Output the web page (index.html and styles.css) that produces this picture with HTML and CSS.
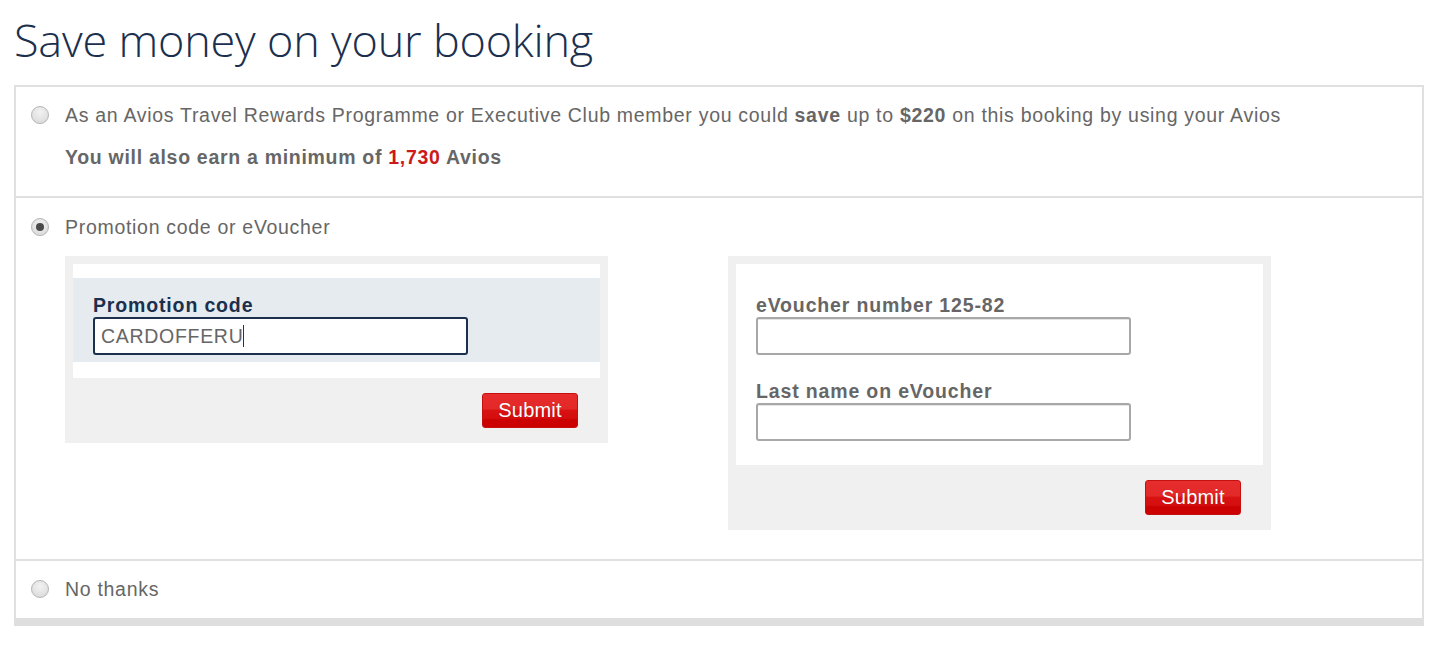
FILE: index.html
```html
<!DOCTYPE html>
<html lang="en">
<head>
<meta charset="utf-8">
<title>Save money on your booking</title>
<link rel="stylesheet" href="styles.css">
</head>
<body>
<div class="page">
  <h1 class="title">Save money on your booking</h1>
  <div class="options">
    <div class="option option-avios">
      <div class="option-head">
        <span class="radio"></span>
        <span class="option-text">As an Avios Travel Rewards Programme or Executive Club member you could <b>save</b> up to <b>$220</b> on this booking by using your Avios</span>
      </div>
      <p class="earn">You will also earn a minimum of <span class="red">1,730</span> Avios</p>
    </div>
    <div class="option option-promo">
      <div class="option-head">
        <span class="radio checked"></span>
        <span class="option-text">Promotion code or eVoucher</span>
      </div>
      <div class="panels">
        <div class="panel">
          <div class="panel-body">
            <div class="band">
              <label class="label label-navy">Promotion code</label>
              <div class="field field-focus"><span class="field-value">CARDOFFERU</span><span class="caret"></span></div>
            </div>
          </div>
          <div class="panel-foot"><button class="btn">Submit</button></div>
        </div>
        <div class="panel">
          <div class="panel-body panel-body-voucher">
            <div class="group">
              <label class="label">eVoucher number 125-82</label>
              <div class="field"></div>
            </div>
            <div class="group group-second">
              <label class="label">Last name on eVoucher</label>
              <div class="field"></div>
            </div>
          </div>
          <div class="panel-foot"><button class="btn">Submit</button></div>
        </div>
      </div>
    </div>
    <div class="option option-no">
      <div class="option-head">
        <span class="radio"></span>
        <span class="option-text">No thanks</span>
      </div>
    </div>
  </div>
</div>
</body>
</html>
```
FILE: styles.css
```css
* { box-sizing: border-box; }
html, body { margin: 0; padding: 0; background: #fff; }
body { font-family: "Liberation Sans", Arial, sans-serif; color: #666; }

.page { padding: 0 12px 0 14px; }

.title {
  margin: 0;
  padding-top: 10px;
  height: 85px;
  font-family: "Open Sans", "Noto Sans", sans-serif;
  font-weight: 300;
  font-size: 45px;
  line-height: 60px;
  color: #1b2f4e;
  letter-spacing: -0.2px;
}

.options {
  border: 2px solid #e0e0e0;
  border-bottom: 8px solid #dedede;
}

.option { padding: 15px 15px 0; }
.option + .option { border-top: 2px solid #e0e0e0; }
.option-avios { padding-bottom: 26px; }
.option-promo { padding-top: 16px; padding-bottom: 29px; }
.option-no { padding-top: 15px; padding-bottom: 16px; }

.option-head { display: flex; align-items: center; gap: 16px; height: 26px; }
.option-text { font-size: 19.5px; line-height: 26px; letter-spacing: 0.7px; white-space: nowrap; }
.option-text b { font-weight: bold; }

.radio {
  flex: none;
  width: 18px; height: 18px;
  border-radius: 50%;
  border: 1px solid #b5b5b5;
  background: radial-gradient(circle at 50% 35%, #f2f2f2 0%, #e2e2e2 60%, #d6d6d6 100%);
  position: relative;
}
.radio.checked::after {
  content: "";
  position: absolute;
  left: 4px; top: 4px;
  width: 8px; height: 8px;
  border-radius: 50%;
  background: #4a4a4a;
}

.earn {
  margin: 16px 0 0 34px;
  font-size: 19.5px;
  line-height: 26px;
  letter-spacing: 0.7px;
  font-weight: bold;
}
.red { color: #cc1a1a; }

.panels { display: flex; align-items: flex-start; gap: 120px; margin: 16px 0 0 34px; }
.panel { width: 543px; background: #f0f0f0; padding: 8px; }
.panel-body { background: #fff; padding: 14px 0 16px; }
.band { background: #e6ebef; padding: 16px 20px 7px; }
.panel-body-voucher { padding: 30px 20px 24px; }
.group-second { margin-top: 25px; }

.label {
  display: block;
  font-size: 19.5px;
  line-height: 23px;
  letter-spacing: 0.85px;
  font-weight: bold;
  color: #666;
}
.label-navy { color: #1b2f4e; }

.field {
  width: 375px;
  height: 38px;
  border: 2px solid #a8a8a8;
  border-radius: 3px;
  background: #fff;
  display: flex;
  align-items: center;
  padding-left: 6px;
  box-shadow: inset 0 1px 0 #e4e4e4;
}
.field-focus { border-color: #1b2f4e; box-shadow: none; }
.field-value { font-size: 19.5px; letter-spacing: 0.7px; color: #666; }
.caret { width: 1px; height: 22px; background: #333; margin-left: 0; }

.panel-foot { display: flex; justify-content: flex-end; padding: 15px 22px 7px; }

.btn {
  width: 96px;
  height: 35px;
  border: 1px solid #c51010;
  border-radius: 3px;
  background: linear-gradient(#e62c2c 0%, #e32828 45%, #d81212 50%, #d40e0e 74%, #cc0303 76%, #cc0000 100%);
  color: #fff;
  font-family: "Liberation Sans", Arial, sans-serif;
  font-size: 20px;
  letter-spacing: 0.2px;
  padding: 0;
  line-height: 33px;
  text-shadow: 0 0 1px rgba(0,0,0,0.25);
}
```
